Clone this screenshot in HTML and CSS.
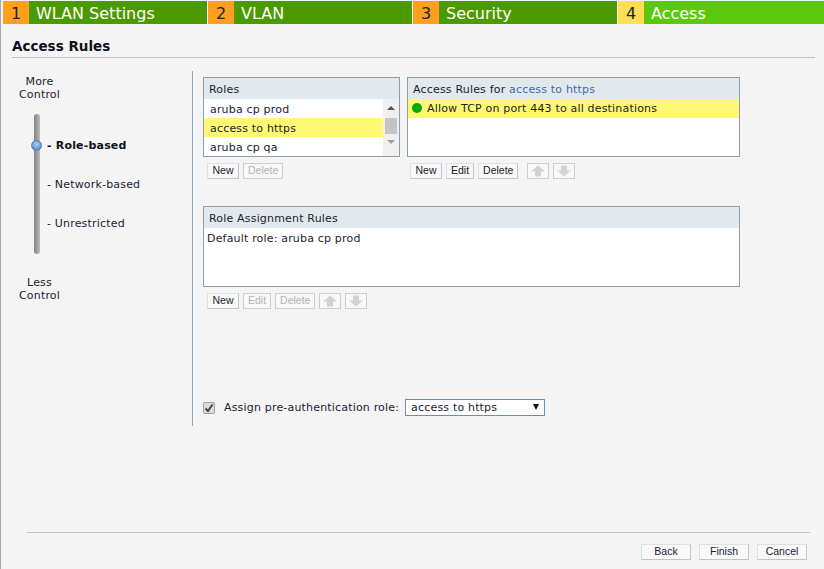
FILE: index.html
```html
<!DOCTYPE html>
<html>

<head>
    <title>Access Rules</title>
    <link rel="stylesheet" href="styles.css">
</head>

<body>
    <!-- Wizard steps -->
    <div class="steps">
        <div class="step"><span class="step-num">1</span><span class="step-name">WLAN Settings</span></div>
        <div class="step"><span class="step-num">2</span><span class="step-name">VLAN</span></div>
        <div class="step"><span class="step-num">3</span><span class="step-name">Security</span></div>
        <div class="step step-active"><span class="step-num">4</span><span class="step-name">Access</span></div>
    </div>

    <h1 class="page-title">Access Rules</h1>

    <div class="content">
        <!-- Slider -->
        <div class="side">
            <div class="side-cap">More<br>Control</div>
            <div class="slider">
                <div class="track"><span class="knob"></span></div>
                <div class="levels">
                    <div class="level level-on">- Role-based</div>
                    <div class="level">- Network-based</div>
                    <div class="level">- Unrestricted</div>
                </div>
            </div>
            <div class="side-cap side-cap-low">Less<br>Control</div>
        </div>

        <div class="main">
            <div class="top-row">
                <div class="col col-roles">
                    <div class="box box-top">
                        <div class="box-head">Roles</div>
                        <div class="roles-body">
                            <div class="rows">
                                <div class="row">aruba cp prod</div>
                                <div class="row row-on">access to https</div>
                                <div class="row">aruba cp qa</div>
                            </div>
                            <div class="scrollbar">
                                <span class="arrow-up"></span>
                                <span class="thumb"></span>
                                <span class="arrow-down"></span>
                            </div>
                        </div>
                    </div>
                    <div class="btn-row btn-row-roles">
                        <button class="btn">New</button>
                        <button class="btn btn-off">Delete</button>
                    </div>
                </div>

                <div class="col col-rules">
                    <div class="box box-top">
                        <div class="box-head">Access Rules for <span class="link">access to https</span></div>
                        <div class="row row-on row-rule"><span class="dot"></span>Allow TCP on port 443 to all destinations</div>
                    </div>
                    <div class="btn-row btn-row-rules">
                        <button class="btn">New</button>
                        <button class="btn">Edit</button>
                        <button class="btn">Delete</button>
                        <button class="btn btn-off btn-move btn-move-first"><svg width="16" height="12" viewBox="0 0 16 12"><path d="M8 0.5 15 6.5H11V11.5H5V6.5H1Z" fill="#d2d2d2"/></svg></button>
                        <button class="btn btn-off btn-move"><svg width="16" height="12" viewBox="0 0 16 12"><path d="M8 11.5 15 5.5H11V0.5H5V5.5H1Z" fill="#d2d2d2"/></svg></button>
                    </div>
                </div>
            </div>

            <div class="box box-assign">
                <div class="box-head">Role Assignment Rules</div>
                <div class="assign-text">Default role: aruba cp prod</div>
            </div>
            <div class="btn-row btn-row-assign">
                <button class="btn">New</button>
                <button class="btn btn-off">Edit</button>
                <button class="btn btn-off">Delete</button>
                <button class="btn btn-off btn-move"><svg width="16" height="12" viewBox="0 0 16 12"><path d="M8 0.5 15 6.5H11V11.5H5V6.5H1Z" fill="#d2d2d2"/></svg></button>
                <button class="btn btn-off btn-move"><svg width="16" height="12" viewBox="0 0 16 12"><path d="M8 11.5 15 5.5H11V0.5H5V5.5H1Z" fill="#d2d2d2"/></svg></button>
            </div>

            <div class="pre-auth">
                <span class="check"><svg width="10" height="10" viewBox="0 0 10 10"><path d="M1.5 5.5 4 8 8.5 1.5" fill="none" stroke="#444" stroke-width="2"/></svg></span>
                <span class="pre-label">Assign pre-authentication role:</span>
                <div class="select">access to https<span class="select-arrow"></span></div>
            </div>
        </div>
    </div>

    <!-- Footer buttons -->
    <div class="footer">
        <button class="btn btn-foot">Back</button>
        <button class="btn btn-foot">Finish</button>
        <button class="btn btn-foot">Cancel</button>
    </div>
</body>

</html>
```

FILE: styles.css
```css
* {
    box-sizing: border-box;
}

body {
    margin: 0;
    height: 569px;
    overflow: hidden;
    background-color: #f4f4f4;
    border-left: 1px solid #a8a8a8;
    font-family: "DejaVu Sans", sans-serif;
    font-size: 11px;
    letter-spacing: 0.18px;
    color: #1c1c30;
}

/* Wizard steps */
.steps {
    display: flex;
    gap: 1px;
    height: 24px;
    padding: 1px 0 0 2px;
    background-color: #f4f4f4;
}

.step {
    display: flex;
    width: 204px;
    height: 23px;
    background-color: #4b9a00;
    color: #fff;
    font-size: 16px;
    letter-spacing: 0;
    line-height: 25px;
}

.step-active {
    flex: 1;
    background-color: #5cc80b;
}

.step-num {
    width: 26px;
    background-color: #ff9f1f;
    color: #222;
    text-align: center;
}

.step-active .step-num {
    background-color: #ffdd55;
}

.step-name {
    padding-left: 7px;
}

.page-title {
    height: 19px;
    margin: 15px 9px 0 11px;
    padding-bottom: 3px;
    border-bottom: 1px solid #bcc4d0;
    font-size: 13.5px;
    letter-spacing: 0;
    line-height: 15px;
    color: #10101c;
}

.content {
    display: flex;
    margin-top: 13px;
}

/* Slider */
.side {
    width: 191px;
    height: 355px;
}

.side-cap {
    width: 77px;
    padding-top: 4px;
    line-height: 13px;
    text-align: center;
}

.side-cap-low {
    padding-top: 20px;
}

.slider {
    display: flex;
    margin: 13px 0 0 33px;
}

.track {
    position: relative;
    width: 6px;
    height: 140px;
    border-radius: 3px;
    background: linear-gradient(to right, #808080, #bdbdbd);
}

.knob {
    position: absolute;
    left: -3px;
    top: 26px;
    width: 11px;
    height: 11px;
    border-radius: 50%;
    border: 1px solid #5d7fa8;
    background: radial-gradient(circle at 50% 35%, #a9cdf5, #3f78c8);
}

.levels {
    padding: 25px 0 0 7px;
}

.level {
    height: 39px;
    line-height: 14px;
}

.level-on {
    font-weight: bold;
    color: #10101c;
}

/* Panels */
.main {
    width: 560px;
    height: 355px;
    padding: 6px 0 0 10px;
    border-left: 1px solid #8fa9c0;
}

.top-row {
    display: flex;
    gap: 7px;
}

.col-roles {
    width: 197px;
}

.col-rules {
    width: 333px;
}

.box {
    border: 1px solid #8a9fb0;
    background-color: #fff;
}

.box-top {
    height: 80px;
}

.box-head {
    height: 21px;
    padding-left: 5px;
    background-color: #e2e9ed;
    line-height: 23px;
}

.link {
    color: #3a6cb0;
}

.roles-body {
    display: flex;
}

.rows {
    flex: 1;
}

.row {
    height: 19px;
    padding-left: 6px;
    line-height: 21px;
}

.row-on {
    background-color: #fff873;
}

.row-rule {
    display: flex;
    align-items: center;
    padding-left: 4px;
}

.dot {
    width: 10px;
    height: 10px;
    margin: 0 5px 2px 0;
    border-radius: 50%;
    background-color: #0aa80a;
}

.scrollbar {
    display: flex;
    flex-direction: column;
    align-items: center;
    width: 16px;
    background-color: #f0f0f0;
}

.thumb {
    width: 12px;
    height: 16px;
    margin: 8px 0 6px;
    background-color: #c4c4c4;
}

.arrow-up {
    margin-top: 7px;
    border-left: 4px solid transparent;
    border-right: 4px solid transparent;
    border-bottom: 4px solid #555;
}

.arrow-down {
    border-left: 4px solid transparent;
    border-right: 4px solid transparent;
    border-top: 4px solid #a0a0a0;
}

/* Buttons */
.btn-row {
    display: flex;
    gap: 4px;
    margin-top: 6px;
}

.btn-row-roles {
    padding-left: 4px;
}

.btn-row-rules {
    padding-left: 3px;
}

.btn-row-assign {
    padding-left: 4px;
}

.btn {
    min-width: 28px;
    height: 16px;
    padding: 0 4px 1px;
    border: 1px solid #e0e0e0;
    border-right-color: #c4c4c4;
    border-bottom-color: #c4c4c4;
    background-color: #f8f8f8;
    font-family: "Liberation Sans", sans-serif;
    font-size: 10.5px;
    letter-spacing: 0;
    line-height: 13px;
    color: #1c1c30;
}

.btn:first-child {
    min-width: 32px;
}

.btn-off {
    border-color: #cdcdcd;
    color: #b4b4b4;
}

.btn-move {
    display: flex;
    align-items: center;
    justify-content: center;
    width: 22px;
    min-width: 22px;
    padding: 0;
}

.btn-move-first {
    margin-left: 5px;
}

.box-assign {
    width: 537px;
    height: 81px;
    margin-top: 27px;
}

.assign-text {
    padding: 4px 0 0 3px;
    line-height: 13px;
}

/* Pre-auth role */
.pre-auth {
    display: flex;
    align-items: center;
    margin-top: 90px;
}

.check {
    display: flex;
    align-items: center;
    justify-content: center;
    width: 12px;
    height: 12px;
    border: 1px solid #a0a0a0;
    border-radius: 2px;
    background-color: #dcdcdc;
}

.pre-label {
    margin: 0 6px 0 9px;
}

.select {
    position: relative;
    width: 140px;
    height: 17px;
    padding-left: 5px;
    border: 1px solid #6f8fa8;
    background-color: #fff;
    line-height: 16px;
}

.select-arrow {
    position: absolute;
    right: 5px;
    top: 4px;
    border-left: 3px solid transparent;
    border-right: 3px solid transparent;
    border-top: 6px solid #111;
}

/* Footer */
.footer {
    display: flex;
    justify-content: flex-end;
    gap: 8px;
    margin: 106px 14px 0 26px;
    padding: 11px 3px 0 0;
    border-top: 1px solid #b8c8d8;
}

.btn-foot {
    width: 50px;
    height: 16px;
}
```
